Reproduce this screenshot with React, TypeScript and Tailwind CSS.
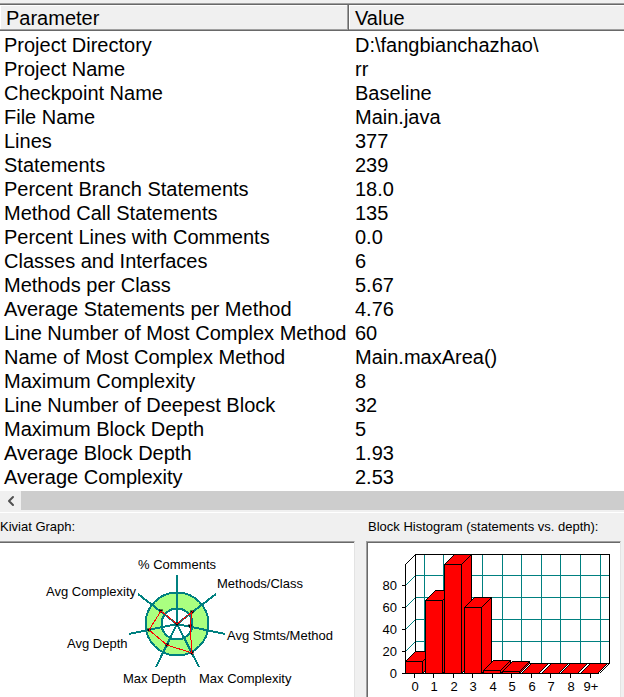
import { ChevronLeft } from 'lucide-react'

const metrics = [
  { name: 'Project Directory', value: 'D:\\fangbianchazhao\\' },
  { name: 'Project Name', value: 'rr' },
  { name: 'Checkpoint Name', value: 'Baseline' },
  { name: 'File Name', value: 'Main.java' },
  { name: 'Lines', value: '377' },
  { name: 'Statements', value: '239' },
  { name: 'Percent Branch Statements', value: '18.0' },
  { name: 'Method Call Statements', value: '135' },
  { name: 'Percent Lines with Comments', value: '0.0' },
  { name: 'Classes and Interfaces', value: '6' },
  { name: 'Methods per Class', value: '5.67' },
  { name: 'Average Statements per Method', value: '4.76' },
  { name: 'Line Number of Most Complex Method', value: '60' },
  { name: 'Name of Most Complex Method', value: 'Main.maxArea()' },
  { name: 'Maximum Complexity', value: '8' },
  { name: 'Line Number of Deepest Block', value: '32' },
  { name: 'Maximum Block Depth', value: '5' },
  { name: 'Average Block Depth', value: '1.93' },
  { name: 'Average Complexity', value: '2.53' },
]

// label position, spoke end and plotted value for each axis
const axes = [
  { label: '% Comments', tx: 138, ty: 26, x: 177, y: 32, px: 177, py: 81 },
  { label: 'Methods/Class', tx: 217, ty: 45, x: 216, y: 51, px: 192, py: 69 },
  { label: 'Avg Stmts/Method', tx: 227, ty: 97, x: 225, y: 91, px: 190, py: 83 },
  { label: 'Max Complexity', tx: 199, ty: 140, x: 199, y: 124, px: 192, py: 110 },
  { label: 'Max Depth', tx: 123, ty: 140, x: 156, y: 124, px: 167, py: 102 },
  { label: 'Avg Depth', tx: 67, ty: 105, x: 129, y: 91, px: 149, py: 87 },
  { label: 'Avg Complexity', tx: 46, ty: 53, x: 138, y: 51, px: 161, py: 68 },
]

// x is the left edge of the bar, top its upper edge
const bars = [
  { label: '0', x: 37, top: 118, tick: 46 },
  { label: '1', x: 57, top: 57, tick: 65 },
  { label: '2', x: 76, top: 21, tick: 85 },
  { label: '3', x: 96, top: 64, tick: 104 },
  { label: '4', x: 115, top: 127, tick: 124 },
  { label: '5', x: 134, top: 128, tick: 143 },
  { label: '6', x: 153, top: 130, tick: 163 },
  { label: '7', x: 173, top: 130, tick: 182 },
  { label: '8', x: 192, top: 130, tick: 202 },
  { label: '9+', x: 212, top: 130, tick: 222 },
]

const levels = [
  { label: '80', y: 42 },
  { label: '60', y: 64 },
  { label: '40', y: 86 },
  { label: '20', y: 108 },
  { label: '0', y: 130 },
]

const gridX = [56, 75, 95, 114, 134, 153, 173, 192, 212, 232]

function MetricsTable() {
  return (
    <table className="w-full table-fixed border-separate border-spacing-0 border-t border-[#a0a0a0] text-left text-[20px] leading-6">
      <colgroup>
        <col className="w-[349px]" />
        <col />
      </colgroup>
      <thead className="bg-[#f0f0f0]">
        <tr>
          <th className="h-[27px] border-t border-r border-b border-[#696969] p-0 pl-1.5 font-normal shadow-[inset_-1px_-1px_0_#a0a0a0,inset_1px_1px_0_#ffffff]">
            Parameter
          </th>
          <th className="h-[27px] border-t border-b border-[#696969] p-0 pl-1.5 font-normal shadow-[inset_0_-1px_0_#a0a0a0,inset_1px_1px_0_#ffffff]">
            Value
          </th>
        </tr>
      </thead>
      <tbody className="before:block before:h-0.5 before:content-['']">
        {metrics.map(({ name, value }) => (
          <tr key={name}>
            <td className="h-6 whitespace-nowrap p-0 pl-1">{name}</td>
            <td className="h-6 whitespace-nowrap p-0 pl-1.5">{value}</td>
          </tr>
        ))}
      </tbody>
    </table>
  )
}

function KiviatGraph() {
  return (
    <svg width="353" height="154" className="block text-[13px]" role="img" aria-label="Kiviat Graph">
      <circle cx="177" cy="81" r="24" fill="none" stroke="#aaff80" strokeWidth="16" />
      <g fill="none" stroke="#008080" strokeWidth="2" shapeRendering="crispEdges">
        <circle cx="177" cy="81" r="31.5" />
        <circle cx="177" cy="81" r="15.5" />
        {axes.map((a) => (
          <line key={a.label} x1="177" y1="81" x2={a.x} y2={a.y} />
        ))}
      </g>
      {axes.map((a) => (
        <path key={a.label} d={`M${a.px - 2} ${a.py - 1.5}h4l-1 3h-2z`} />
      ))}
      <polygon
        points={axes.map((a) => `${a.px},${a.py}`).join(' ')}
        fill="none"
        stroke="#ff0000"
        shapeRendering="crispEdges"
      />
      {axes.map((a) => (
        <text key={a.label} x={a.tx} y={a.ty}>
          {a.label}
        </text>
      ))}
    </svg>
  )
}

function BlockHistogram() {
  return (
    <svg width="252" height="154" className="block text-[13px]" role="img" aria-label="Block Histogram">
      <g transform="translate(.5 .5)" fill="none" stroke="#008080" shapeRendering="crispEdges">
        {gridX.map((x) => (
          <path key={x} d={`M${x} 11V120`} />
        ))}
        {levels.slice(0, 4).map((l) => (
          <path key={l.label} d={`M37 ${l.y}l10 -10H241`} />
        ))}
      </g>
      <g transform="translate(.5 .5)" fill="none" stroke="#000" shapeRendering="crispEdges">
        <path d="M37 130V21l10 -10H241V120H47V11M37 130l10 -10M241 120l-10 10" />
        <path d="M37 130H230" />
        {levels.map((l) => (
          <path key={l.label} d={`M33 ${l.y}h4`} />
        ))}
        {bars.map((b) => (
          <path key={b.label} d={`M${b.tick} 130v4`} />
        ))}
      </g>
      <g transform="translate(.5 .5)" fill="#ff0000" stroke="#000" shapeRendering="crispEdges">
        {bars.map((b) => (
          <g key={b.label}>
            <path d={`M${b.x} ${b.top}l10 -10h17l-10 10z`} />
            {b.top < 130 && (
              <>
                <path d={`M${b.x + 17} ${b.top}l10 -10V120l-10 10z`} />
                <path d={`M${b.x} ${b.top}h17V130h-17z`} />
              </>
            )}
          </g>
        ))}
      </g>
      {levels.map((l) => (
        <text key={l.label} x="29" y={l.y + 5} textAnchor="end">
          {l.label}
        </text>
      ))}
      {bars.map((b) => (
        <text key={b.label} x={b.tick + 1} y="148" textAnchor="middle">
          {b.label}
        </text>
      ))}
    </svg>
  )
}

export default function App() {
  return (
    <main className="min-h-screen overflow-hidden bg-[#f0f0f0] font-['Liberation_Sans',Arial,sans-serif] text-black">
      <section className="bg-white pb-0.5">
        <div className="h-[3px] bg-[#f0f0f0]" />
        <MetricsTable />
      </section>

      {/* Horizontal scrollbar */}
      <div className="flex h-[19px] bg-[#f0f0f0]">
        <button type="button" aria-label="Scroll left" className="flex w-[21px] items-center justify-center">
          <ChevronLeft className="h-4 w-4 text-[#505050]" strokeWidth={3} />
        </button>
        <div className="flex-1 bg-[#cdcdcd]" />
      </div>
      <div className="h-[3px] border-b border-white" />

      {/* Charts */}
      <div className="grid grid-cols-[355fr_255fr] gap-x-[11px] pr-[3px] text-[13px]">
        <section>
          <h2 className="flex h-7 items-center">Kiviat Graph:</h2>
          <div className="border-t border-r border-t-[#a0a0a0] border-r-[#e3e3e3]">
            <div className="overflow-hidden border-t border-[#696969] bg-white">
              <KiviatGraph />
            </div>
          </div>
        </section>
        <section>
          <h2 className="flex h-7 items-center pl-0.5">Block Histogram (statements vs. depth):</h2>
          <div className="border-t border-r border-l border-t-[#a0a0a0] border-r-[#e3e3e3] border-l-[#a0a0a0]">
            <div className="overflow-hidden border-t border-l border-[#696969] bg-white">
              <BlockHistogram />
            </div>
          </div>
        </section>
      </div>
    </main>
  )
}
